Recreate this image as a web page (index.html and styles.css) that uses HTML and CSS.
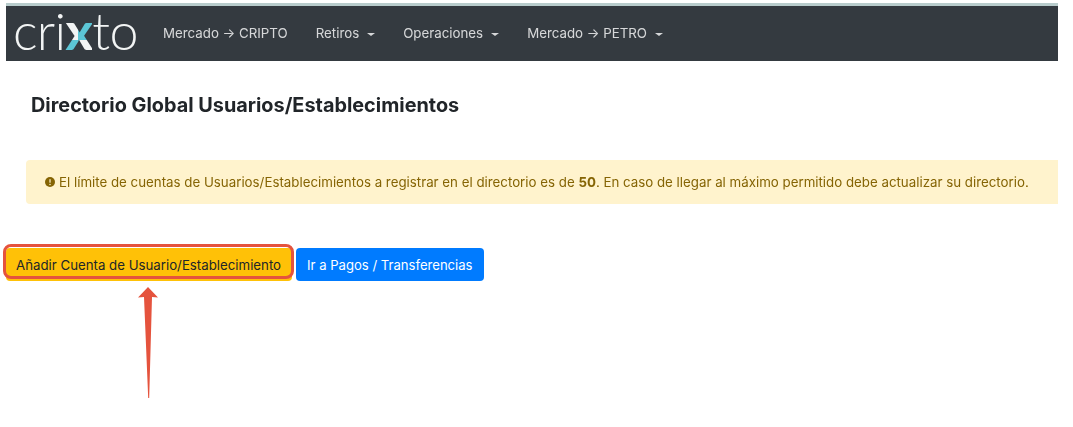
FILE: index.html
```html
<!DOCTYPE html>
<html>

<head>
    <title>Directorio Global</title>
    <link rel="stylesheet" href="styles.css">
</head>

<body>
    <nav class="navbar">
        <a class="logo" href="#">cri<span class="logo-x">x</span>to</a>
        <ul class="nav-links">
            <li><a href="#">Mercado → CRIPTO</a></li>
            <li><a href="#" class="caret">Retiros</a></li>
            <li><a href="#" class="caret">Operaciones</a></li>
            <li><a href="#" class="caret">Mercado → PETRO</a></li>
        </ul>
    </nav>

    <main class="content">
        <h1>Directorio Global Usuarios/Establecimientos</h1>
        <div class="alert">
            <svg class="alert-icon" viewBox="0 0 16 16">
                <circle cx="8" cy="8" r="8" fill="#856404"/>
                <rect x="7" y="3.2" width="2" height="6" rx="1" fill="#fff3cd"/>
                <circle cx="8" cy="11.8" r="1.2" fill="#fff3cd"/>
            </svg>
            <span>El límite de cuentas de Usuarios/Establecimientos a registrar en el directorio es de <b>50</b>. En caso de llegar al máximo permitido debe actualizar su directorio.</span>
        </div>
        <div class="actions">
            <a href="#" class="btn btn-warning">Añadir Cuenta de Usuario/Establecimiento<span class="highlight"></span></a>
            <a href="#" class="btn btn-primary">Ir a Pagos / Transferencias</a>
        </div>
    </main>

    <svg class="arrow" viewBox="0 0 22 112">
        <path d="M11 0 L21 10.5 L15 10 L12.2 111 L11.2 111 L7 10 L1 10.5 Z" fill="#e5533d"/>
    </svg>
</body>

</html>
```

FILE: styles.css
```css
:root {
    font-family: Inter, "Noto Sans", sans-serif;
}

body {
    position: relative;
    min-height: 100vh;
    box-sizing: border-box;
    margin: 0;
    padding: 3px 15px 0 6px;
    background: white;
}

.navbar,
.content {
    filter: blur(0.5px);
}

.navbar {
    display: flex;
    align-items: center;
    height: 55px;
    color: white;
    background: #343a40;
    border-top: 3px solid #b8cccc;
}

.logo {
    width: 157px;
    padding: 0 0 6px 7px;
    box-sizing: border-box;
    color: #f2f4f4;
    font-family: Lato, sans-serif;
    font-size: 52px;
    font-weight: 300;
    line-height: 49px;
    letter-spacing: -0.7px;
    text-decoration: none;
}

.logo-x {
    color: transparent;
    background: conic-gradient(#5cc6d6 0 90deg, #f2f4f4 90deg 180deg, #5cc6d6 180deg 270deg, #f2f4f4 270deg);
    background-position: 0 10px;
    -webkit-background-clip: text;
    background-clip: text;
    font-weight: 900;
}

.nav-links {
    display: flex;
    gap: 28px;
    margin: 0;
    padding: 0 0 4px;
    list-style: none;
}

.nav-links a {
    color: rgba(255, 255, 255, 0.8);
    font-size: 13.3px;
    text-decoration: none;
}

.caret::after {
    content: "";
    display: inline-block;
    margin-left: 8px;
    vertical-align: 2px;
    border-top: 3px solid rgba(255, 255, 255, 0.8);
    border-left: 4px solid transparent;
    border-right: 4px solid transparent;
}

.content {
    padding-top: 32px;
}

h1 {
    margin: 0 0 43px 25px;
    color: #212529;
    font-size: 19.85px;
    font-weight: 700;
    line-height: 24px;
}

.alert {
    display: flex;
    align-items: center;
    gap: 4px;
    height: 44px;
    margin: 0 0 44px 20px;
    padding-left: 19px;
    color: #856404;
    background: #fff3cd;
    border-radius: 4px 0 0 4px;
    font-size: 13.3px;
}

.alert-icon {
    width: 10px;
    height: 10px;
}

.actions {
    display: flex;
    gap: 4px;
}

.btn {
    position: relative;
    display: flex;
    align-items: center;
    height: 33px;
    padding: 0 11px 0 10px;
    border-radius: 4px;
    font-size: 13.25px;
    text-decoration: none;
}

.btn-warning {
    color: #212529;
    background: #ffc107;
}

.btn-primary {
    padding-left: 11px;
    color: white;
    background: #007bff;
    font-size: 13.1px;
}

.highlight {
    position: absolute;
    top: -4px;
    left: -3px;
    right: -2px;
    bottom: 2px;
    border: 3px solid #e5533d;
    border-radius: 8px;
}

.arrow {
    position: absolute;
    top: 287px;
    left: 137px;
    width: 22px;
    height: 112px;
}
```
